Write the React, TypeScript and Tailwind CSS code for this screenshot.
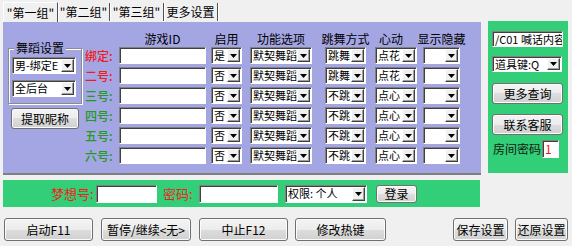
import React from "react";

const Arrow = () => (
  <svg width="7" height="4" viewBox="0 0 7 4">
    <path d="M0 0H7L3.5 4Z" fill="#000" />
  </svg>
);

function Select({ cls, text }: { cls: string; text: string }) {
  return (
    <div
      className={`flex bg-white border border-t-[#808080] border-l-[#808080] border-b-white border-r-white shadow-[inset_1px_1px_0_#404040] ${cls}`}
    >
      <div className="flex-1 pl-[2px] flex items-center overflow-hidden whitespace-nowrap leading-none text-[11px]">
        {text}
      </div>
      <div className="w-[13px] my-[1px] mr-[1px] bg-[#F0F0F0] border border-t-white border-l-white border-b-[#404040] border-r-[#404040] shadow-[inset_-1px_-1px_0_#a0a0a0] flex items-center justify-center shrink-0">
        <Arrow />
      </div>
    </div>
  );
}

function Input({ cls, text = "", tcls = "" }: { cls: string; text?: string; tcls?: string }) {
  return (
    <div
      className={`flex items-center bg-white border border-t-[#808080] border-l-[#808080] border-b-white border-r-white shadow-[inset_1px_1px_0_#404040] overflow-hidden whitespace-nowrap pl-[2px] leading-none ${cls} ${tcls}`}
    >
      {text}
    </div>
  );
}

function Btn({ cls, text }: { cls: string; text: string }) {
  return (
    <div
      className={`flex items-center justify-center rounded-[3px] border border-[#707070] bg-[linear-gradient(#f4f4f4,#ececec_50%,#dedede_50%,#d0d0d0)] shadow-[inset_0_0_0_1px_#fbfbfb] leading-none whitespace-nowrap ${cls}`}
    >
      {text}
    </div>
  );
}

function Head({ cls, text }: { cls: string; text: string }) {
  return <div className={`flex justify-center whitespace-nowrap ${cls}`}>{text}</div>;
}

const RED = "text-[#f01c1c]";
const GREEN = "text-[#239a23]";

const rows = [
  { label: "绑定:", c: RED, en: "是", dance: "跳舞", heart: "点花" },
  { label: "二号:", c: RED, en: "否", dance: "跳舞", heart: "点花" },
  { label: "三号:", c: GREEN, en: "否", dance: "不跳", heart: "点心" },
  { label: "四号:", c: GREEN, en: "否", dance: "不跳", heart: "点心" },
  { label: "五号:", c: GREEN, en: "否", dance: "不跳", heart: "点心" },
  { label: "六号:", c: GREEN, en: "否", dance: "不跳", heart: "点心" },
];

export default function App() {
  return (
    <div className="w-[572px] h-[246px] bg-[#F0F0F0] overflow-hidden font-['Noto_Sans_CJK_SC',sans-serif] text-[12px] text-black">
      {/* tabs */}
      <div className="h-[22px] flex items-end pl-[3px]">
        <div className="h-[20px] w-[55px] flex items-center justify-center border-t border-l border-white border-r border-r-[#505050] shadow-[1px_0_0_#ffffff]">
          "第一组"
        </div>
        <div className="h-[18px] w-[52px] mb-[1px] flex items-center justify-center border-r border-r-[#505050] shadow-[1px_0_0_#ffffff]">
          "第二组"
        </div>
        <div className="h-[18px] w-[54px] mb-[1px] flex items-center justify-center border-r border-r-[#505050] shadow-[1px_0_0_#ffffff]">
          "第三组"
        </div>
        <div className="h-[18px] w-[54px] mb-[1px] flex items-center justify-center border-r border-r-[#505050] shadow-[1px_0_0_#ffffff]">
          更多设置
        </div>
      </div>

      {/* main */}
      <div className="flex">
        <div className="ml-[3px] w-[478px] h-[153px] bg-[#A4A6E4] border-b-2 border-b-[#808080] flex">
          {/* left column */}
          <div className="ml-[5px] w-[74px] flex flex-col">
            <div className="relative mt-[26px] h-[56px] border border-[#8c8c8c] shadow-[1px_1px_0_#ffffff,inset_1px_1px_0_#ffffff] pt-[8px] pl-[3px]">
              <div className="absolute -top-[8px] left-[5px] px-[2px] bg-[#A4A6E4] leading-[14px]">
                舞蹈设置
              </div>
              <Select cls="w-[64px] h-[17px]" text="男-绑定E" />
              <Select cls="w-[64px] h-[17px] mt-[6px]" text="全后台" />
            </div>
            <Btn cls="ml-[3px] mt-[4px] w-[68px] h-[21px]" text="提取昵称" />
          </div>

          {/* grid */}
          <div className="ml-[3px] pt-[10px] flex flex-col">
            <div className="flex h-[14px] leading-[14px] mb-[1px]">
              <div className="w-[34px]" />
              <Head cls="w-[87px]" text="游戏ID" />
              <Head cls="ml-[5px] w-[31px]" text="启用" />
              <Head cls="ml-[8px] w-[62px]" text="功能选项" />
              <Head cls="ml-[13px] w-[41px]" text="跳舞方式" />
              <Head cls="ml-[9px] w-[32px]" text="心动" />
              <Head cls="ml-[16px] w-[37px]" text="显示隐藏" />
            </div>
            <div className="flex flex-col gap-[3px]">
              {rows.map((r) => (
                <div key={r.label} className="flex h-[17px] items-center">
                  <div className={`w-[34px] ${r.c} leading-none font-medium`}>{r.label}</div>
                  <Input cls="w-[87px] h-[17px]" />
                  <Select cls="ml-[5px] w-[31px] h-[17px]" text={r.en} />
                  <Select cls="ml-[8px] w-[62px] h-[17px]" text="默契舞蹈" />
                  <Select cls="ml-[13px] w-[41px] h-[17px]" text={r.dance} />
                  <Select cls="ml-[9px] w-[42px] h-[17px]" text={r.heart} />
                  <Select cls="ml-[6px] w-[37px] h-[17px]" text="" />
                </div>
              ))}
            </div>
          </div>
        </div>

        {/* right green panel */}
        <div className="ml-[7px] -mt-[1px] w-[80px] h-[152px] bg-[#33CE78] pl-[4px] flex flex-col">
          <Input cls="mt-[10px] w-[71px] h-[16px] text-[11px]" text="/C01 喊话内容" />
          <Select cls="mt-[9px] w-[70px] h-[16px]" text="道具键:Q" />
          <Btn cls="mt-[11px] w-[71px] h-[21px]" text="更多查询" />
          <Btn cls="mt-[10px] w-[71px] h-[21px]" text="联系客服" />
          <div className="mt-[5px] flex items-center h-[18px]">
            <div className="ml-[1px] w-[49px] text-[#101810] leading-none">房间密码</div>
            <Input cls="w-[17px] h-[18px]" text="1" tcls="text-[#f01c1c]" />
          </div>
        </div>
      </div>

      {/* bottom green bar */}
      <div className="ml-[3px] mt-[5px] w-[477px] h-[27px] bg-[#33CE78] flex items-center">
        <div className={`ml-[48px] w-[45px] text-[13px] leading-none ${RED}`}>梦想号:</div>
        <Input cls="w-[61px] h-[18px]" />
        <div className={`ml-[6px] w-[36px] text-[13px] leading-none ${RED}`}>密码:</div>
        <Input cls="w-[79px] h-[18px]" />
        <Select cls="ml-[7px] w-[82px] h-[18px]" text="权限: 个人" />
        <Btn cls="ml-[9px] w-[41px] h-[18px]" text="登录" />
      </div>

      {/* bottom buttons */}
      <div className="mt-[11px] flex">
        <Btn cls="ml-[4px] w-[89px] h-[23px]" text="启动F11" />
        <Btn cls="ml-[8px] w-[90px] h-[23px]" text="暂停/继续<无>" />
        <Btn cls="ml-[8px] w-[89px] h-[23px]" text="中止F12" />
        <Btn cls="ml-[7px] w-[91px] h-[23px]" text="修改热键" />
        <Btn cls="ml-[67px] w-[55px] h-[23px]" text="保存设置" />
        <Btn cls="ml-[7px] w-[53px] h-[23px]" text="还原设置" />
      </div>
    </div>
  );
}
